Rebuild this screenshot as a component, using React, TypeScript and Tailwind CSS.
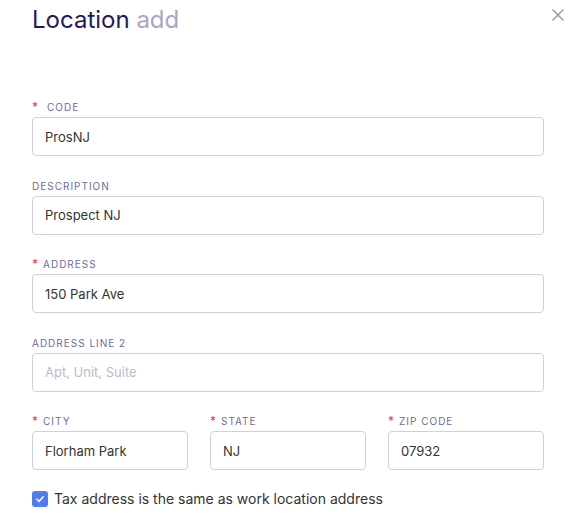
import React from "react";

function Label({ text, required, wide }: { text: string; required?: boolean; wide?: boolean }) {
  return (
    <div className="flex items-center h-[12px] mb-[4px] text-[10px] leading-[12px] tracking-[0.1em] uppercase text-[#6f6b95]">
      {required && (
        <span className={`text-[#e8336a] text-[12px] leading-[12px] ${wide ? "mr-[8px]" : "mr-[4px]"}`}>*</span>
      )}
      <span>{text}</span>
    </div>
  );
}

function Field({
  label,
  value,
  placeholder,
  required,
  wide,
}: {
  label: string;
  value?: string;
  placeholder?: string;
  required?: boolean;
  wide?: boolean;
}) {
  return (
    <div className="flex flex-col">
      <Label text={label} required={required} wide={wide} />
      <input
        readOnly
        value={value ?? ""}
        placeholder={placeholder}
        className="h-[39px] w-full rounded-[4px] border border-[#ccd1dc] bg-white px-[12px] text-[13px] text-[#333333] placeholder:text-[#b9bccb] outline-none"
      />
    </div>
  );
}

export default function App() {
  return (
    <div
      className="relative w-[574px] h-[530px] bg-white overflow-hidden"
      style={{ fontFamily: "Inter, 'Noto Sans', sans-serif" }}
    >
      <button className="absolute right-[9px] top-[8px] text-[#9b98b5]" aria-label="Close">
        <svg width="14" height="14" viewBox="0 0 14 14" fill="none" stroke="currentColor" strokeWidth="1.5">
          <path d="M1.5 1.5l11 11M12.5 1.5l-11 11" />
        </svg>
      </button>

      <div className="px-[32px] pt-[5px]">
        <h1 className="text-[24px] leading-[30px] text-[#201c5c]">
          Location <span className="text-[#a9a6c4]">add</span>
        </h1>

        <div className="mt-[66px] flex flex-col gap-[23.5px] w-[512px]">
          <Field label="Code" value="ProsNJ" required wide />
          <Field label="Description" value="Prospect NJ" />
          <Field label="Address" value="150 Park Ave" required />
          <Field label="Address line 2" placeholder="Apt, Unit, Suite" />
          <div className="grid grid-cols-3 gap-[22px]">
            <Field label="City" value="Florham Park" required />
            <Field label="State" value="NJ" required />
            <Field label="Zip code" value="07932" required />
          </div>
        </div>

        <label className="mt-[18px] flex items-center gap-[6px] text-[14px] text-[#333333]">
          <span className="flex h-[16px] w-[16px] items-center justify-center rounded-[3px] bg-[#4f7cf0]">
            <svg width="10" height="10" viewBox="0 0 10 10" fill="none" stroke="white" strokeWidth="1.6" strokeLinecap="round" strokeLinejoin="round">
              <path d="M1.8 5.2l2.2 2.2 4.2-4.6" />
            </svg>
          </span>
          Tax address is the same as work location address
        </label>
      </div>
    </div>
  );
}
